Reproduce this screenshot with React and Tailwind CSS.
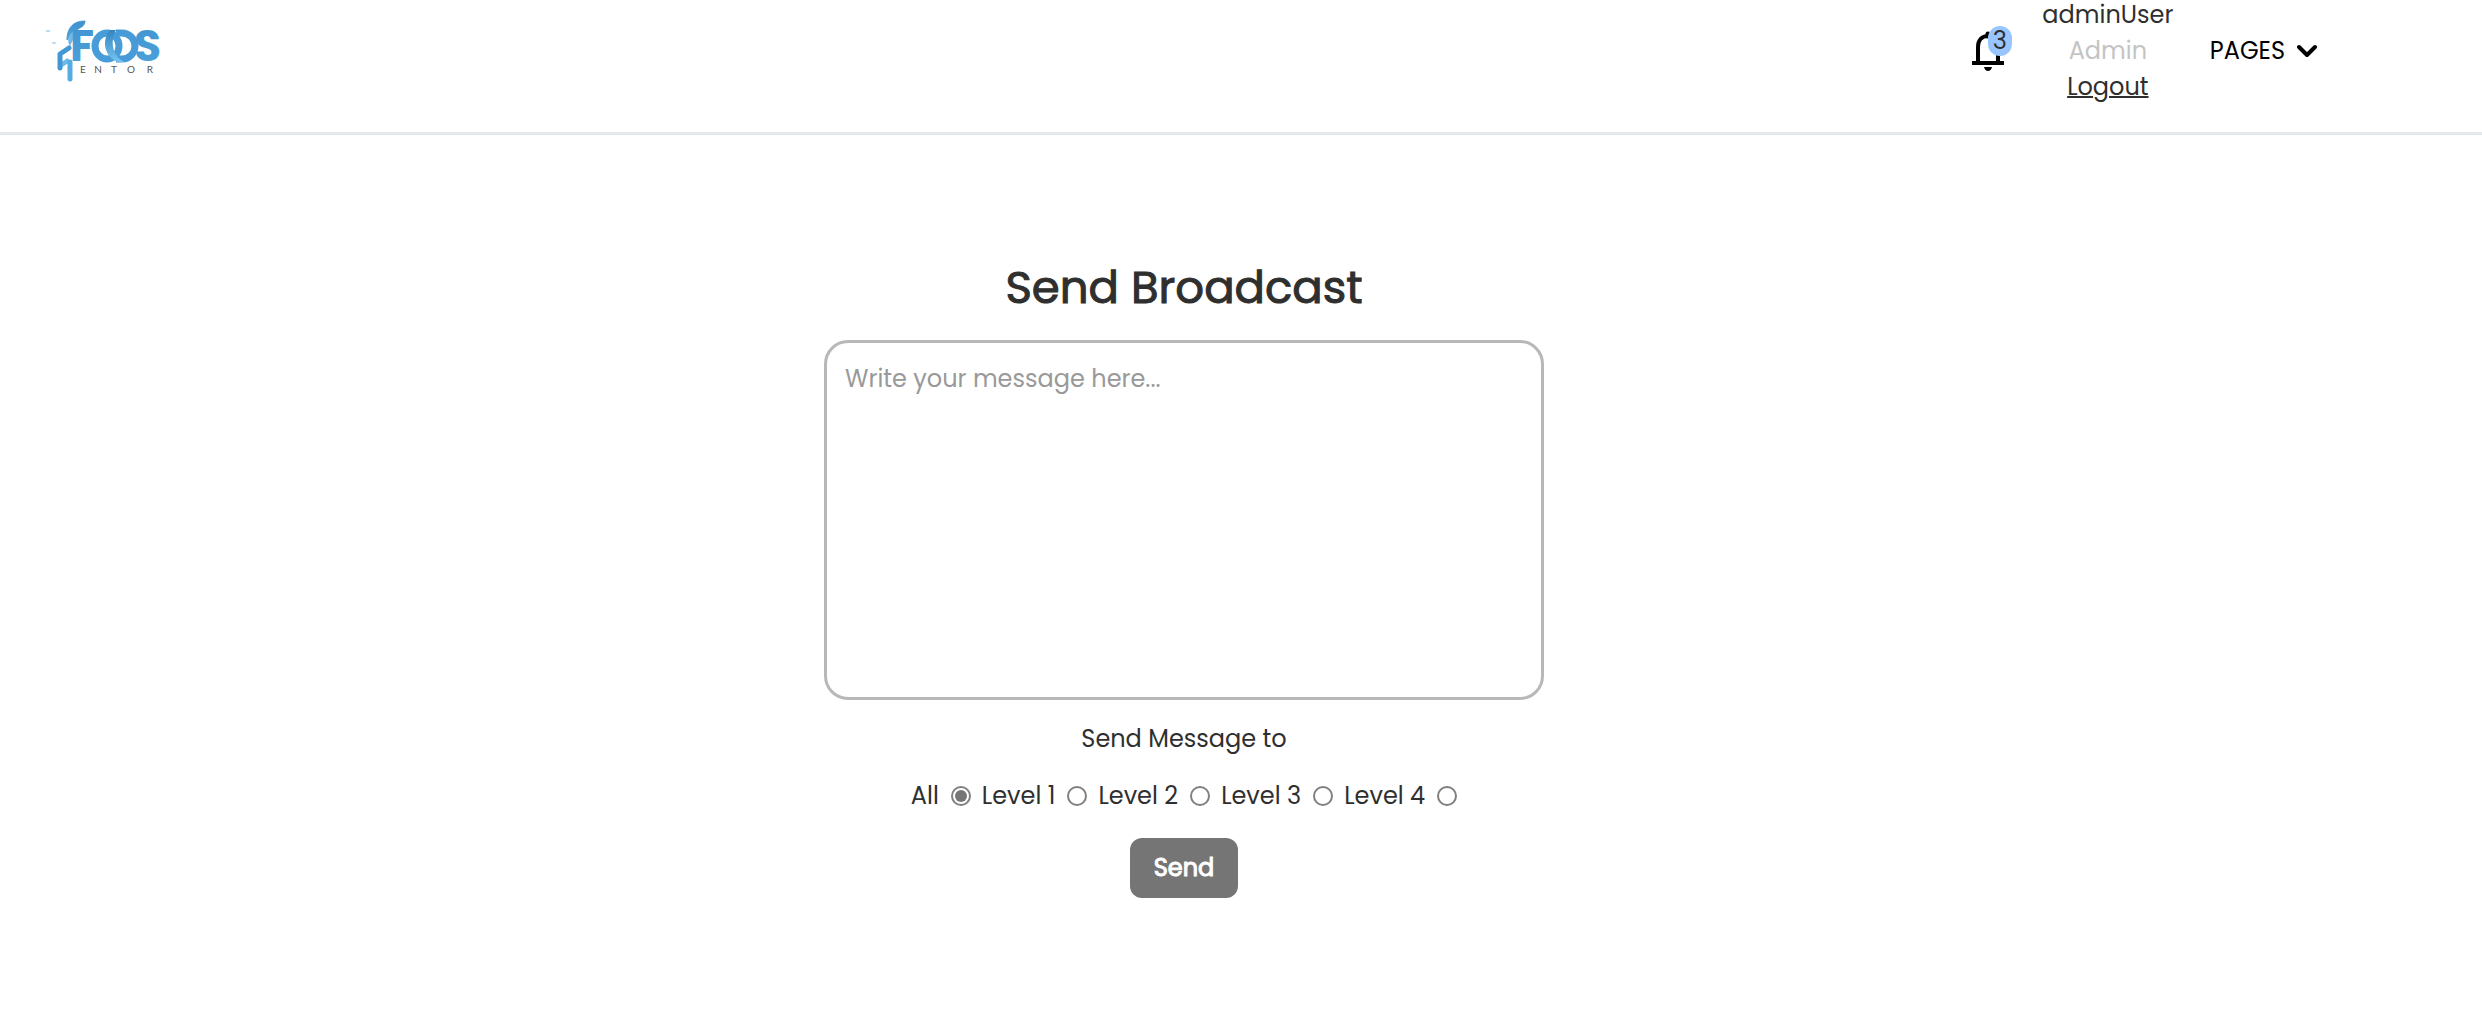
const options = ["All", "Level 1", "Level 2", "Level 3", "Level 4"];

function Logo() {
  return (
    <svg width="124" height="68" viewBox="0 0 124 68" role="img" aria-label="Foos Mentor" className="overflow-visible">
      <defs>
        <linearGradient id="blue" x1="0" y1="0" x2="0" y2="1">
          <stop offset="0" stopColor="#3f90cc" />
          <stop offset="1" stopColor="#4fa6df" />
        </linearGradient>
        <linearGradient id="crescent" x1="0" y1="0" x2="0" y2="1">
          <stop offset="0" stopColor="#3583c0" />
          <stop offset="1" stopColor="#74c4f0" />
        </linearGradient>
      </defs>
      <path d="M1 14l3-1 3 1-3 1zM7 26l3-1 3 1-3 1z" fill="#9ed2f0" />
      <path d="M23 23C23 11 29 4 41 4c0 4-3 6-7 8-5 3-8 6-11 11Z" fill="url(#blue)" stroke="#4596d2" />
      <path d="M26 29c-4-6-1-12 5-16l-2 10Z" fill="#6fbbe8" />
      <path d="M25 43L17 48" stroke="#6bbbe9" strokeWidth="5" />
      <path d="M25 31L16 37V51" fill="none" stroke="#4298d4" strokeWidth="5" strokeLinejoin="round" strokeLinecap="round" />
      <path d="M26 45V62" stroke="#55ace0" strokeWidth="5" strokeLinecap="round" />
      <text x="26" y="44" fontSize="44" fontWeight="700" fill="url(#blue)" className="font-['Poppins','Lato',sans-serif]">F</text>
      <ellipse cx="63" cy="29" rx="12" ry="13" fill="none" stroke="#489dd8" strokeWidth="7" />
      <path d="M72 16h6a13 13 0 0 1 0 26h-6" fill="none" stroke="#479bd6" strokeWidth="7" />
      <path d="M66 13C58 22 59 39 74 45H80C68 38 66 24 72 13Z" fill="url(#crescent)" />
      <text x="90" y="44" fontSize="44" fontWeight="700" fill="url(#blue)" className="font-['Poppins','Lato',sans-serif]">S</text>
      {["E", "N", "T", "O", "R"].map((letter, i) => (
        <text key={letter} x={[39, 54, 70, 87, 106][i]} y="56" textAnchor="middle" fontSize="10" fill="#555" className="font-['Lato',sans-serif]">
          {letter}
        </text>
      ))}
    </svg>
  );
}

function Bell() {
  return (
    <svg width="32" height="42" viewBox="0 0 32 42" fill="none" aria-hidden="true">
      <path d="M6 32V17C6 10 10 6 16 6S26 10 26 17V32M0 33H32" stroke="#000" strokeWidth="4" />
      <path d="M16 6V4" stroke="#000" strokeWidth="5" strokeLinecap="round" />
      <path d="M12 37H20Q19 41 16 41T12 37Z" fill="#000" />
    </svg>
  );
}

export default function App() {
  return (
    <div className="bg-white font-['Poppins','Inter',sans-serif] text-2xl leading-9 text-[#2f2f2f]">
      <header className="border-b-[3px] border-[#e5e9ec] pb-[30px]">
        <div className="flex h-[102px] items-center justify-between pl-11 pr-[165px]">
          <a href="#home">
            <Logo />
          </a>
          <div className="flex items-center">
            <button type="button" aria-label="Notifications, 3 unread" className="relative">
              <Bell />
              <span className="absolute -right-2 -top-1 flex h-[30px] w-6 items-center justify-center rounded-full bg-[#99c5ff]">3</span>
            </button>
            <div className="ml-8 w-36 text-center">
              <p>adminUser</p>
              <p className="text-[#c4c4c4]">Admin</p>
              <a href="#logout" className="underline decoration-2">Logout</a>
            </div>
            <button type="button" className="ml-[30px] flex items-center gap-3 text-black">
              PAGES
              <svg width="20" height="14" viewBox="0 0 20 14" fill="none" aria-hidden="true">
                <path d="M2 3L10 11L18 3" stroke="currentColor" strokeWidth="4" strokeLinecap="round" strokeLinejoin="round" />
              </svg>
            </button>
          </div>
        </div>
      </header>
      <main className="pr-[114px] pt-[117px]">
        <form className="flex flex-col items-center">
          <h1 className="text-[45px] leading-[72px] [-webkit-text-stroke:1px]">
            <label htmlFor="message">Send Broadcast</label>
          </h1>
          <textarea
            id="message"
            placeholder="Write your message here..."
            className="mt-4 h-[360px] w-full max-w-[720px] resize-none rounded-3xl border-[3px] border-[#b8b8b8] p-[18px] placeholder:text-[#999]"
          />
          <fieldset className="mt-[21px] flex flex-col items-center">
            <legend className="mx-auto">Send Message to</legend>
            <div className="mt-[21px] flex gap-[11px]">
              {options.map((option, i) => (
                <label key={option} className="flex items-center gap-3">
                  {option}
                  <input
                    type="radio"
                    name="audience"
                    defaultChecked={i === 0}
                    className="size-5 appearance-none rounded-full border-2 border-[#808080] bg-white bg-clip-content p-0.5 checked:bg-[#767676]"
                  />
                </label>
              ))}
            </div>
          </fieldset>
          <button type="submit" className="mt-6 rounded-xl bg-[#757575] px-6 py-3 text-white [-webkit-text-stroke:1px]">
            Send
          </button>
        </form>
      </main>
    </div>
  );
}
